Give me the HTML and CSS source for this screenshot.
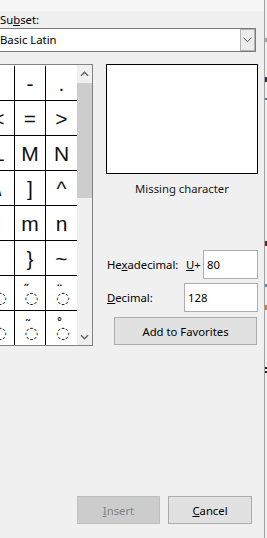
FILE: index.html
```html
<!DOCTYPE html>
<html>
<head>
<meta charset="utf-8">
<link rel="stylesheet" href="styles.css">
</head>
<body>
<div class="screen">
  <div class="dialog">
    <div class="topband"></div>
    <div class="content">
      <div class="subset-label">Su<u>b</u>set:</div>
      <div class="combo">
        <span class="combo-text">Basic Latin</span>
        <span class="combo-btn"><svg width="9" height="6" viewBox="0 0 9 6"><polyline points="0.5,0.8 4.5,4.6 8.5,0.8" fill="none" stroke="#606060" stroke-width="1"/></svg></span>
      </div>
      <div class="main">
        <div class="charmap">
          <div class="cells">
            <div class="cell">,</div><div class="cell">-</div><div class="cell">.</div>
            <div class="cell">&lt;</div><div class="cell">=</div><div class="cell">&gt;</div>
            <div class="cell">L</div><div class="cell">M</div><div class="cell">N</div>
            <div class="cell">\</div><div class="cell">]</div><div class="cell">^</div>
            <div class="cell">l</div><div class="cell">m</div><div class="cell">n</div>
            <div class="cell">|</div><div class="cell">}</div><div class="cell">~</div>
            <div class="cell mark"><span class="dia">ˋ</span><span class="circ">◌</span></div>
            <div class="cell mark"><span class="dia dbl">˝</span><span class="circ">◌</span></div>
            <div class="cell mark"><span class="dia">¨</span><span class="circ">◌</span></div>
            <div class="cell mark"><span class="dia">ˆ</span><span class="circ">◌</span></div>
            <div class="cell mark"><span class="dia">˜</span><span class="circ">◌</span></div>
            <div class="cell mark"><span class="dia">˚</span><span class="circ">◌</span></div>
          </div>
          <div class="vscroll">
            <div class="sb-btn"><svg width="9" height="6" viewBox="0 0 9 6"><polyline points="1,4.8 4.5,1.2 8,4.8" fill="none" stroke="#606060" stroke-width="1.4"/></svg></div>
            <div class="sb-thumb"></div>
            <div class="sb-track"></div>
            <div class="sb-btn down"><svg width="9" height="6" viewBox="0 0 9 6"><polyline points="1,1.2 4.5,4.8 8,1.2" fill="none" stroke="#606060" stroke-width="1.4"/></svg></div>
          </div>
        </div>
        <div class="side">
          <div class="preview"></div>
          <div class="caption">Missing character</div>
          <div class="code-row hex">
            <span class="code-label hex-label">He<u>x</u>adecimal:</span>
            <span class="uplus"><u>U</u>+</span>
            <span class="field">80</span>
          </div>
          <div class="code-row dec">
            <span class="code-label dec-label"><u>D</u>ecimal:</span>
            <span class="field">128</span>
          </div>
          <button class="btn fav">Add to Favorites</button>
        </div>
      </div>
    </div>
    <div class="footer">
      <button class="btn insert disabled"><u>I</u>nsert</button>
      <button class="btn cancel"><u>C</u>ancel</button>
    </div>
  </div>
  <div class="behind">
    <span class="dot d1"></span>
    <span class="dot d2"></span>
    <span class="dot d3"></span>
    <span class="dot d4"></span>
    <span class="dot d5"></span>
    <span class="dot d6"></span>
    <span class="dot d7"></span>
    <span class="dot d8"></span>
  </div>
</div>
</body>
</html>
```
FILE: styles.css
```css
html, body {
  margin: 0;
  padding: 0;
}
body {
  width: 267px;
  height: 538px;
  overflow: hidden;
  font-family: "Noto Sans", "Open Sans", sans-serif;
  font-size: 11.3px;
  color: #000;
}
.screen {
  display: flex;
  height: 538px;
}
.dialog {
  width: 264px;
  flex: none;
  border-right: 1px solid #a0a0a0;
  background: #f0f0f0;
  display: flex;
  flex-direction: column;
  overflow: hidden;
}
.behind {
  flex: 1;
  background: #f2f2f2;
  position: relative;
}
.dot {
  position: absolute;
  left: 0;
  width: 2px;
  height: 2px;
}
.d1 { top: 38px; height: 4px; background: #a8a8a8; }
.d2 { top: 77px; height: 5px; background: #2b2f45; }
.d3 { top: 98px; height: 2px; background: #4a78b0; }
.d4 { top: 241px; height: 5px; background: #6a2a1a; }
.d5 { top: 284px; height: 3px; background: #4a98c8; }
.d6 { top: 305px; height: 5px; background: #d07a2a; }
.d7 { top: 367px; height: 2px; background: #202020; }
.d8 { top: 371px; height: 2px; background: #202020; }

.topband {
  height: 11px;
  flex: none;
  background: #f6f6f6;
}
.content {
  margin-left: -18px;
  display: flex;
  flex-direction: column;
}
.subset-label {
  margin-left: 18px;
  height: 17px;
  line-height: 17px;
}
.combo {
  margin-left: 14px;
  width: 260px;
  height: 24px;
  box-sizing: border-box;
  border: 1px solid #7a7a7a;
  background: #fff;
  display: flex;
  align-items: stretch;
}
.combo-text {
  flex: 1;
  padding-left: 3px;
  line-height: 22px;
}
.combo-btn {
  width: 15px;
  box-sizing: border-box;
  border: 1px solid #b4b4b4;
  background: #ececec;
  display: flex;
  align-items: center;
  justify-content: center;
}
.main {
  display: flex;
  align-items: flex-start;
  margin-top: 12px;
}
.charmap {
  display: flex;
  height: 282px;
  box-sizing: border-box;
  border: 1px solid #828282;
  background: #fff;
}
.cells {
  width: 94px;
  height: 280px;
  box-sizing: border-box;
  padding-top: 1px;
  overflow: hidden;
  display: grid;
  grid-template-columns: 32px 31px 31px;
  grid-auto-rows: 35px;
  align-content: start;
}
.cell {
  box-sizing: border-box;
  border-bottom: 1px solid #000;
  display: flex;
  align-items: center;
  justify-content: center;
  font-family: "Liberation Sans", Arial, sans-serif;
  font-size: 21px;
  line-height: 1;
  color: #111;
}
.cell:nth-child(3n+1),
.cell:nth-child(3n+2) {
  border-right: 1px solid #000;
}
.cell.mark {
  flex-direction: column;
  font-family: "DejaVu Sans", sans-serif;
  color: #222;
  padding-top: 1px;
}
.dia {
  height: 7px;
  line-height: 14px;
  font-size: 13px;
  font-weight: bold;
  margin-left: -4px;
  overflow: visible;
}
.dia.dbl {
  margin-left: -8px;
}
.circ {
  font-size: 16px;
  line-height: 15px;
  margin-left: 3px;
}
.vscroll {
  width: 15px;
  background: #f0f0f0;
  display: flex;
  flex-direction: column;
}
.sb-btn {
  height: 18px;
  display: flex;
  align-items: center;
  justify-content: center;
}
.sb-btn.down {
  height: 17px;
}
.sb-thumb {
  height: 115px;
  background: #cdcdcd;
}
.sb-track {
  flex: 1;
}
.side {
  margin-left: 13px;
  width: 152px;
  display: flex;
  flex-direction: column;
}
.preview {
  height: 110px;
  box-sizing: border-box;
  border: 1px solid #000;
  background: #fff;
}
.caption {
  margin-top: 7px;
  line-height: 16px;
  text-align: center;
  color: #1a1a1a;
}
.code-row {
  display: flex;
  align-items: center;
  height: 29px;
}
.code-row.hex {
  margin-top: 53px;
}
.code-row.dec {
  margin-top: 4px;
}
.code-label {
  box-sizing: border-box;
  padding-left: 1px;
}
.hex-label {
  width: 80px;
}
.dec-label {
  width: 78px;
}
.uplus {
  width: 17px;
}
.field {
  flex: 1;
  height: 29px;
  box-sizing: border-box;
  border: 1px solid #adadad;
  background: #fff;
  padding-left: 3px;
  line-height: 27px;
}
.btn {
  box-sizing: border-box;
  height: 28px;
  padding: 0;
  margin: 0;
  font-family: "Noto Sans", "Open Sans", sans-serif;
  font-size: 11.3px;
  color: #000;
  background: #e1e1e1;
  border: 1px solid #adadad;
  border-radius: 0;
}
.fav {
  margin-top: 5px;
  margin-left: 8px;
  width: 143px;
}
.footer {
  margin-top: auto;
  display: flex;
  justify-content: flex-end;
  gap: 8px;
  padding: 0 12px 14px 0;
}
.insert {
  width: 83px;
}
.cancel {
  width: 84px;
}
.btn.disabled {
  background: #cccccc;
  border-color: #bfbfbf;
  color: #838383;
}
```
